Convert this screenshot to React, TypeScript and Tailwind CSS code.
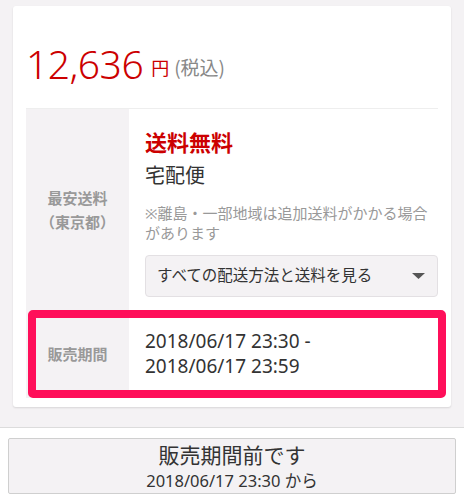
import React from 'react';

const JP = "font-['Noto_Sans','Noto_Sans_CJK_JP',sans-serif]";

const App: React.FC = () => {
  return (
    <div className={`min-h-[500px] bg-[#f4f2f4] ${JP}`}>
      {/* Item card */}
      <div className="px-[13px] pt-[6px] pb-[20px]">
        <div className="bg-white rounded-[3px] shadow-[0_1px_2px_rgba(0,0,0,0.12)] px-[13px] pt-[38px] pb-[9px]">
          <div className="flex items-baseline h-[64px]">
            <span className="text-[39px] leading-none font-light text-[#cc0000] tracking-[-0.5px]">12,636</span>
            <span className="ml-[8px] text-[18px] leading-none text-[#cc0000] relative -top-[4px]">円</span>
            <span className="ml-[5px] font-['Noto_Sans_CJK_JP',sans-serif] text-[19px] leading-none text-[#888] relative -top-[4px]">(税込)</span>
          </div>

          <div className="border-t border-[#eeeeee]">
            {/* Shipping row */}
            <div className="flex">
              <div className="w-[103px] shrink-0 bg-[#f4f2f4] flex items-center justify-center text-center text-[15px] leading-[24px] font-bold text-[#999]">
                <div className="mt-[1px]">
                  最安送料
                  <br />
                  （東京都）
                </div>
              </div>
              <div className="flex-1 pl-[16px] pt-[19px] pb-[13px]">
                <div className="text-[22px] leading-[28px] font-bold text-[#cc0000]">送料無料</div>
                <div className="mt-[6px] text-[20px] leading-[28px] text-[#333]">宅配便</div>
                <div className="mt-[13px] text-[15px] leading-[20px] text-[#999]">
                  ※離島・一部地域は追加送料がかかる場合があります
                </div>
                <button className="mt-[12px] w-full h-[42px] flex items-center justify-between pl-[11px] pr-[12px] bg-[#f4f2f4] border border-[#e3e0e3] rounded-[4px] text-[15.5px] text-[#333]">
                  <span>すべての配送方法と送料を見る</span>
                  <svg width="13" height="6" viewBox="0 0 13 6">
                    <path d="M0 0h13L6.5 6z" fill="#555" />
                  </svg>
                </button>
              </div>
            </div>

            {/* Sales period row */}
            <div className="relative flex h-[88px]">
              <div className="w-[103px] shrink-0 bg-[#f4f2f4] flex items-center justify-center text-[15px] font-bold text-[#999]">
                販売期間
              </div>
              <div className="flex-1 pl-[16px] flex flex-col justify-center text-[19px] leading-[25px] text-[#333]">
                <div>2018/06/17 23:30 -</div>
                <div>2018/06/17 23:59</div>
              </div>
              {/* highlight box */}
              <div className="absolute top-0 bottom-0 left-[2px] -right-[8px] border-[8px] border-[#ff0f5a] rounded-[5px] pointer-events-none" />
            </div>
          </div>
        </div>
      </div>

      {/* Bottom bar */}
      <div className="border-t border-[#dcdcdc] bg-white px-[8px] pt-[10px] pb-[7px]">
        <button className="w-full h-[56px] pt-[4px] flex flex-col items-center justify-center bg-[#f4f2f4] border border-[#cfcfcf] rounded-[2px] text-[#333]">
          <span className="text-[21px] leading-[25px]">販売期間前です</span>
          <span className="text-[16.5px] leading-[25px]">2018/06/17 23:30 から</span>
        </button>
      </div>
    </div>
  );
};

export default App;
